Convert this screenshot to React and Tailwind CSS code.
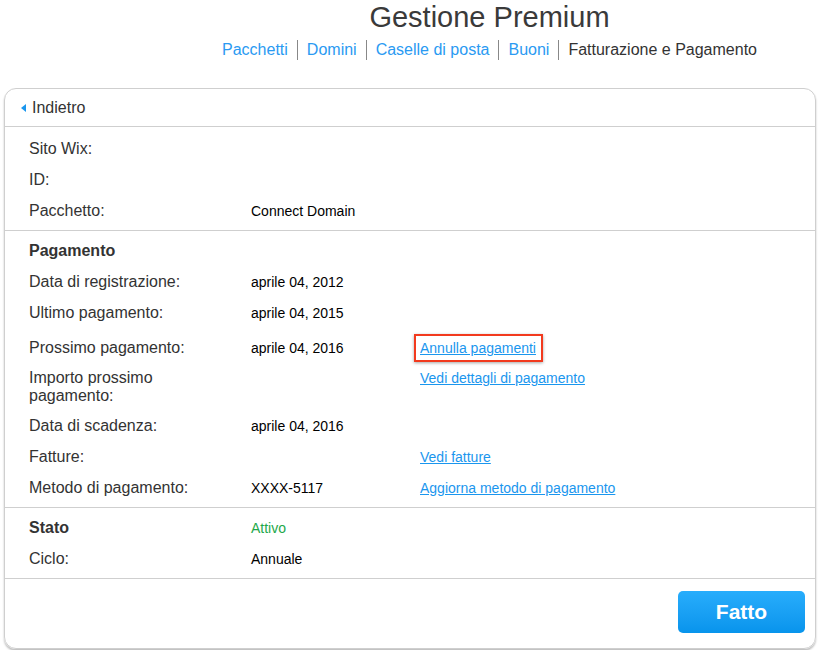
const Row = ({ label, value, link, bold, valueClass = "text-black", className = "h-[31px] items-center", children }) => {
  return (
    <div className={`flex ${className}`}>
      <div className={`w-[222px] shrink-0 text-[16px] leading-[18px] text-[#333] ${bold ? "font-semibold" : ""}`}>{label}</div>
      <div className={`w-[169px] shrink-0 text-[14px] leading-[18px] ${valueClass}`}>{value}</div>
      <div className="text-[14px] leading-[18px]">
        {children ||
          (link && (
            <a href="#" className="text-[#1a96ee] underline">
              {link}
            </a>
          ))}
      </div>
    </div>
  );
};

export default function App() {
  return (
    <div className="w-[819px] h-[650px] bg-white overflow-hidden" style={{ fontFamily: '"Liberation Sans", Arial, sans-serif' }}>
      <div className="pl-[160px] flex flex-col items-center">
        <h1 className="text-[29px] leading-[32px] mt-[1px] text-[#3a3a3a] font-light">Gestione Premium</h1>
        <nav className="flex items-center mt-[7px] text-[16px] leading-[18px]">
          <a href="#" className="text-[#2a9af2] pr-[9px]">Pacchetti</a>
          <span className="w-px h-[20px] bg-[#888]" />
          <a href="#" className="text-[#2a9af2] px-[9px]">Domini</a>
          <span className="w-px h-[20px] bg-[#888]" />
          <a href="#" className="text-[#2a9af2] px-[9px]">Caselle di posta</a>
          <span className="w-px h-[20px] bg-[#888]" />
          <a href="#" className="text-[#2a9af2] px-[9px]">Buoni</a>
          <span className="w-px h-[20px] bg-[#888]" />
          <span className="text-[#333] pl-[9px]">Fatturazione e Pagamento</span>
        </nav>
      </div>

      <div className="ml-[4px] mt-[28px] w-[812px] h-[561px] border border-[#cfcfcf] rounded-[12px] shadow-[0_2px_2px_rgba(0,0,0,0.25)] overflow-hidden">
        <div className="h-[38px] flex items-center pl-[16px] border-b border-[#cfcfcf]">
          <span className="w-0 h-0 border-y-[4px] border-y-transparent border-r-[5px] border-r-[#1a96ee] mr-[6px]" />
          <span className="text-[16px] text-[#333]">Indietro</span>
        </div>

        <div className="pl-[24px] pt-[6px] pb-[4px] border-b border-[#cfcfcf]">
          <Row label="Sito Wix:" />
          <Row label="ID:" />
          <Row label="Pacchetto:" value="Connect Domain" />
        </div>

        <div className="pl-[24px] pt-[4px] pb-[4px] border-b border-[#cfcfcf]">
          <Row label="Pagamento" bold />
          <Row label="Data di registrazione:" value="aprile 04, 2012" />
          <Row label="Ultimo pagamento:" value="aprile 04, 2015" />
          <Row label="Prossimo pagamento:" value="aprile 04, 2016" className="h-[39px] items-center">
            <span className="-ml-[6px] inline-block border-2 border-[#f23a1e] pl-[4px] pr-[5px] py-[3px] shadow-[0_1px_3px_rgba(0,0,0,0.35)]">
              <a href="#" className="text-[#1a96ee] underline">Annulla pagamenti</a>
            </span>
          </Row>
          <Row
            label={
              <>
                Importo prossimo
                <br />
                pagamento:
              </>
            }
            link="Vedi dettagli di pagamento"
            className="h-[43px] items-start pt-[2px]"
          />
          <Row label="Data di scadenza:" value="aprile 04, 2016" />
          <Row label="Fatture:" link="Vedi fatture" />
          <Row label="Metodo di pagamento:" value="XXXX-5117" link="Aggiorna metodo di pagamento" />
        </div>

        <div className="pl-[24px] pt-[4px] pb-[4px] border-b border-[#cfcfcf]">
          <Row label="Stato" bold value="Attivo" valueClass="text-[#1ea84a]" />
          <Row label="Ciclo:" value="Annuale" />
        </div>

        <div className="flex justify-end pt-[12px] pr-[10px]">
          <button className="w-[127px] h-[42px] rounded-[5px] bg-gradient-to-b from-[#27adfc] to-[#0794ec] text-white text-[21px] font-bold">
            Fatto
          </button>
        </div>
      </div>
    </div>
  );
}
